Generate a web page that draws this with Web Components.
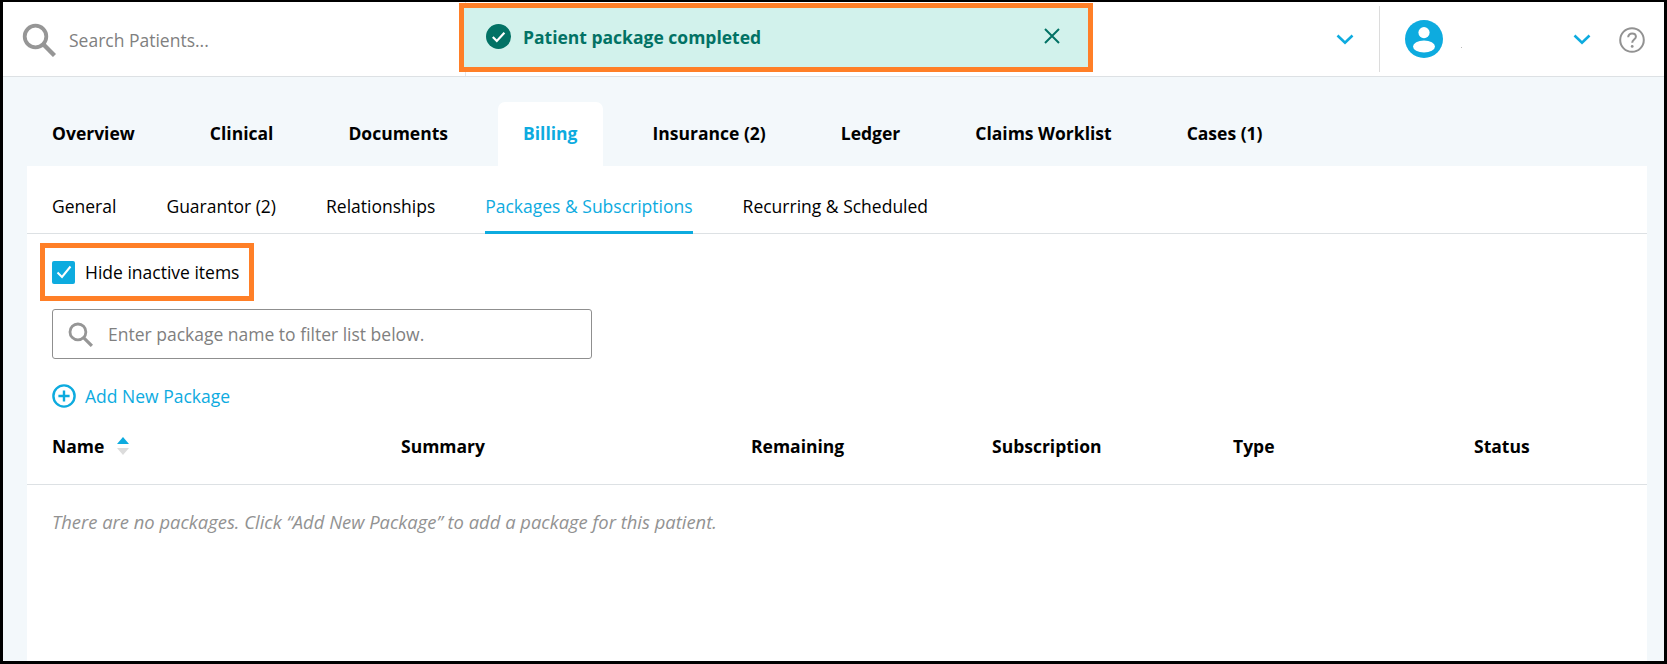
<!DOCTYPE html>
<html>
<head>
<meta charset="utf-8">
<title>Patient billing</title>
<style>
html,body{margin:0;height:100%;overflow:hidden;background:#000;}
body{font-family:"Open Sans","Liberation Sans",sans-serif;}
</style>
</head>
<body>
<app-shell>
   <top-bar slot="top"></top-bar>
   <main-tabs slot="tabs" active="Billing" items="Overview|Clinical|Documents|Billing|Insurance (2)|Ledger|Claims Worklist|Cases (1)"></main-tabs>
   <billing-card slot="card">
      <sub-tabs active="Packages &amp; Subscriptions" items="General|Guarantor (2)|Relationships|Packages &amp; Subscriptions|Recurring &amp; Scheduled"></sub-tabs>
      <hide-check>Hide inactive items</hide-check>
      <filter-box placeholder="Enter package name to filter list below."></filter-box>
      <add-link>Add New Package</add-link>
      <package-table></package-table>
   </billing-card>
</app-shell>
<script>
const SEARCH = (size) => `<svg width="${size}" height="${size}" viewBox="0 0 34 34" fill="none" stroke="#969696"><circle cx="13.5" cy="13.5" r="10.8" stroke-width="3.8"/><path d="M21.5 21.5L32.5 32.5" stroke-width="4.4"/></svg>`;
const CHEVRON = `<svg width="18" height="11" viewBox="0 0 18 11" fill="none" stroke="#0dabdf" stroke-width="2.6"><path d="M1.5 1.5L9 8.6L16.5 1.5"/></svg>`;

class AppShell extends HTMLElement {
   constructor() {
      super();
      this.attachShadow({mode: 'open'});
      this.shadowRoot.innerHTML = `
      <style>
         :host{display:flex;flex-direction:column;box-sizing:border-box;width:1667px;height:664px;border:solid #000;border-width:2px 3px 3px 3px;background:#f3f8fb;overflow:hidden;}
         .body{flex:1;display:flex;flex-direction:column;padding:25px 17px 0 24px;min-height:0;}
      </style>
      <slot name="top"></slot>
      <div class="body">
         <slot name="tabs"></slot>
         <slot name="card"></slot>
      </div>`;
   }
}
customElements.define('app-shell', AppShell);

class TopBar extends HTMLElement {
   constructor() {
      super();
      this.attachShadow({mode: 'open'});
      this.shadowRoot.innerHTML = `
      <style>
         :host{display:flex;align-items:center;position:relative;box-sizing:border-box;height:75px;background:#fff;border-bottom:1px solid #dde1e4;flex:none;}
         .search{display:flex;align-items:center;gap:13px;padding-left:19px;width:462px;box-sizing:border-box;height:100%;margin-top:2px;}
         .search svg{flex:none;}
         .search span{font-size:17.5px;color:#808080;}
         .mid{flex:1;height:100%;border-left:1px solid #e4e6e8;display:flex;align-items:center;justify-content:flex-end;padding-right:25px;box-sizing:border-box;}
         .user{width:285px;box-sizing:border-box;height:66px;align-self:flex-start;margin-top:4px;border-left:1px solid #dcdcdc;display:flex;align-items:center;padding-left:25px;position:relative;}
         .dot{margin-left:18px;margin-top:16px;width:1px;height:1px;background:#bbb;}
         .user .chev{margin-left:auto;margin-right:28px;display:flex;}
         .help{margin-right:19px;display:flex;margin-top:1px;}
      </style>
      <div class="search">${SEARCH(34)}<span>Search Patients...</span></div>
      <div class="mid">${CHEVRON}</div>
      <div class="user">
         <svg class="avatar" width="38" height="38" viewBox="0 0 38 38"><circle cx="19" cy="19" r="19" fill="#0dabdf"/><circle cx="19" cy="12.6" r="5.6" fill="#fff"/><ellipse cx="19" cy="26.5" rx="11" ry="6" fill="#fff"/></svg>
         <span class="dot"></span>
         <span class="chev">${CHEVRON}</span>
         <span class="help"><svg width="26" height="26" viewBox="0 0 26 26" fill="none"><circle cx="13" cy="13" r="11.8" stroke="#929292" stroke-width="2"/><path d="M9.2 10.2c0-2.4 1.8-3.8 3.9-3.8c2.2 0 3.8 1.4 3.8 3.3c0 2.8-3.7 3-3.7 6" stroke="#929292" stroke-width="2"/><circle cx="13.2" cy="19.4" r="1.4" fill="#929292"/></svg></span>
      </div>
      <toast-note>Patient package completed</toast-note>`;
   }
}
customElements.define('top-bar', TopBar);

class ToastNote extends HTMLElement {
   constructor() {
      super();
      this.attachShadow({mode: 'open'});
      this.shadowRoot.innerHTML = `
      <style>
         :host{position:absolute;left:456px;top:1px;width:634px;height:69px;box-sizing:border-box;border:5px solid #ff7f27;background:#d2f2ec;display:flex;align-items:center;padding:0 27px 0 22px;color:#027265;}
         svg{flex:none;}
         .msg{margin-left:12px;font-size:17.5px;font-weight:700;flex:1;margin-top:-2px;}
         .ic{margin-top:-2px;}
         .x{margin-top:-3px;}
      </style>
      <svg class="ic" width="25" height="25" viewBox="0 0 25 25"><circle cx="12.5" cy="12.5" r="12.5" fill="#027265"/><path d="M6.8 13l4 4l7.6-8.2" fill="none" stroke="#fff" stroke-width="2.2"/></svg>
      <span class="msg"><slot></slot></span>
      <svg class="x" width="18" height="18" viewBox="0 0 18 18" fill="none" stroke="#027265" stroke-width="2"><path d="M2 2L16 16M16 2L2 16"/></svg>`;
   }
}
customElements.define('toast-note', ToastNote);

class MainTabs extends HTMLElement {
   constructor() {
      super();
      this.attachShadow({mode: 'open'});
      const active = this.getAttribute('active');
      const tabs = this.getAttribute('items').split('|').map(t =>
         `<span class="tab${t === active ? ' on' : ''}">${t}</span>`).join('');
      this.shadowRoot.innerHTML = `
      <style>
         :host{display:flex;gap:25px;height:64px;flex:none;}
         .tab{display:flex;align-items:center;padding:0 25px 2px;font-size:17.5px;font-weight:700;color:#000;height:64px;box-sizing:border-box;border-radius:7px 7px 0 0;}
         .on{background:#fff;color:#0dabdf;}
      </style>
      ${tabs}`;
   }
}
customElements.define('main-tabs', MainTabs);

class BillingCard extends HTMLElement {
   constructor() {
      super();
      this.attachShadow({mode: 'open'});
      this.shadowRoot.innerHTML = `
      <style>
         :host{display:flex;flex-direction:column;flex:1;background:#fff;min-height:0;}
      </style>
      <slot></slot>`;
   }
}
customElements.define('billing-card', BillingCard);

class SubTabs extends HTMLElement {
   constructor() {
      super();
      this.attachShadow({mode: 'open'});
      const active = this.getAttribute('active');
      const tabs = this.getAttribute('items').split('|').map(t =>
         `<span class="tab${t === active ? ' on' : ''}">${t.replace('&', '&amp;')}</span>`).join('');
      this.shadowRoot.innerHTML = `
      <style>
         :host{display:flex;gap:50px;height:68px;box-sizing:border-box;padding-left:25px;border-bottom:1px solid #dde1e4;flex:none;}
         .tab{display:flex;align-items:center;font-size:17.5px;color:#000;height:68px;box-sizing:border-box;padding-top:20px;padding-bottom:8px;}
         .on{color:#0dabdf;border-bottom:3px solid #0dabdf;padding-bottom:5px;}
      </style>
      ${tabs}`;
   }
}
customElements.define('sub-tabs', SubTabs);

class HideCheck extends HTMLElement {
   constructor() {
      super();
      this.attachShadow({mode: 'open'});
      this.shadowRoot.innerHTML = `
      <style>
         :host{display:flex;align-items:center;gap:10px;align-self:flex-start;box-sizing:border-box;margin:9px 0 8px 13px;padding:0 0 0 7px;width:214px;height:58px;border:5px solid #ff7f27;font-size:17.5px;color:#000;flex:none;}
         .box{flex:none;width:23px;height:23px;border-radius:2px;background:#0dabdf;display:flex;align-items:center;justify-content:center;}
      </style>
      <span class="box"><svg width="16" height="14" viewBox="0 0 16 14" fill="none" stroke="#fff" stroke-width="2"><path d="M1.5 7.5L6 12L14.5 1.5"/></svg></span>
      <span><slot></slot></span>`;
   }
}
customElements.define('hide-check', HideCheck);

class FilterBox extends HTMLElement {
   constructor() {
      super();
      this.attachShadow({mode: 'open'});
      this.shadowRoot.innerHTML = `
      <style>
         :host{display:flex;align-items:center;gap:15px;box-sizing:border-box;margin-left:25px;width:540px;height:50px;border:1px solid #8f8f8f;border-radius:3px;padding-left:15px;flex:none;}
         span{font-size:17.5px;color:#808080;}
      </style>
      ${SEARCH(25)}
      <span>${this.getAttribute('placeholder')}</span>`;
   }
}
customElements.define('filter-box', FilterBox);

class AddLink extends HTMLElement {
   constructor() {
      super();
      this.attachShadow({mode: 'open'});
      this.shadowRoot.innerHTML = `
      <style>
         :host{display:flex;align-items:center;gap:9px;margin:24px 0 0 25px;height:25px;font-size:17.5px;color:#0dabdf;flex:none;}
      </style>
      <svg width="24" height="24" viewBox="0 0 24 24" fill="none" stroke="#0dabdf" stroke-width="2.4"><circle cx="12" cy="12" r="10.6"/><path d="M12 6.4V17.6M6.4 12H17.6"/></svg>
      <span><slot></slot></span>`;
   }
}
customElements.define('add-link', AddLink);

class PackageTable extends HTMLElement {
   constructor() {
      super();
      this.attachShadow({mode: 'open'});
      this.shadowRoot.innerHTML = `
      <style>
         :host{display:block;margin-top:18px;flex:none;}
         .head{display:grid;grid-template-columns:349px 350px 241px 241px 241px 1fr;height:59px;box-sizing:border-box;padding:0 0 18px 25px;align-items:center;border-bottom:1px solid #dde1e4;font-size:17.5px;font-weight:700;color:#000;}
         .name{display:flex;align-items:center;gap:13px;}
         .sort{display:flex;flex-direction:column;gap:4px;}
         .sort i{display:block;width:0;height:0;border-left:6.5px solid transparent;border-right:6.5px solid transparent;}
         .up{border-bottom:7px solid #0dabdf;}
         .down{border-top:7px solid #dcdcdc;}
         .empty{padding:24px 0 0 25px;font-size:18.4px;font-style:italic;color:#929292;}
      </style>
      <div class="head">
         <span class="name">Name<span class="sort"><i class="up"></i><i class="down"></i></span></span>
         <span>Summary</span><span>Remaining</span><span>Subscription</span><span>Type</span><span>Status</span>
      </div>
      <div class="empty">There are no packages. Click “Add New Package” to add a package for this patient.</div>`;
   }
}
customElements.define('package-table', PackageTable);
</script>
</body>
</html>
